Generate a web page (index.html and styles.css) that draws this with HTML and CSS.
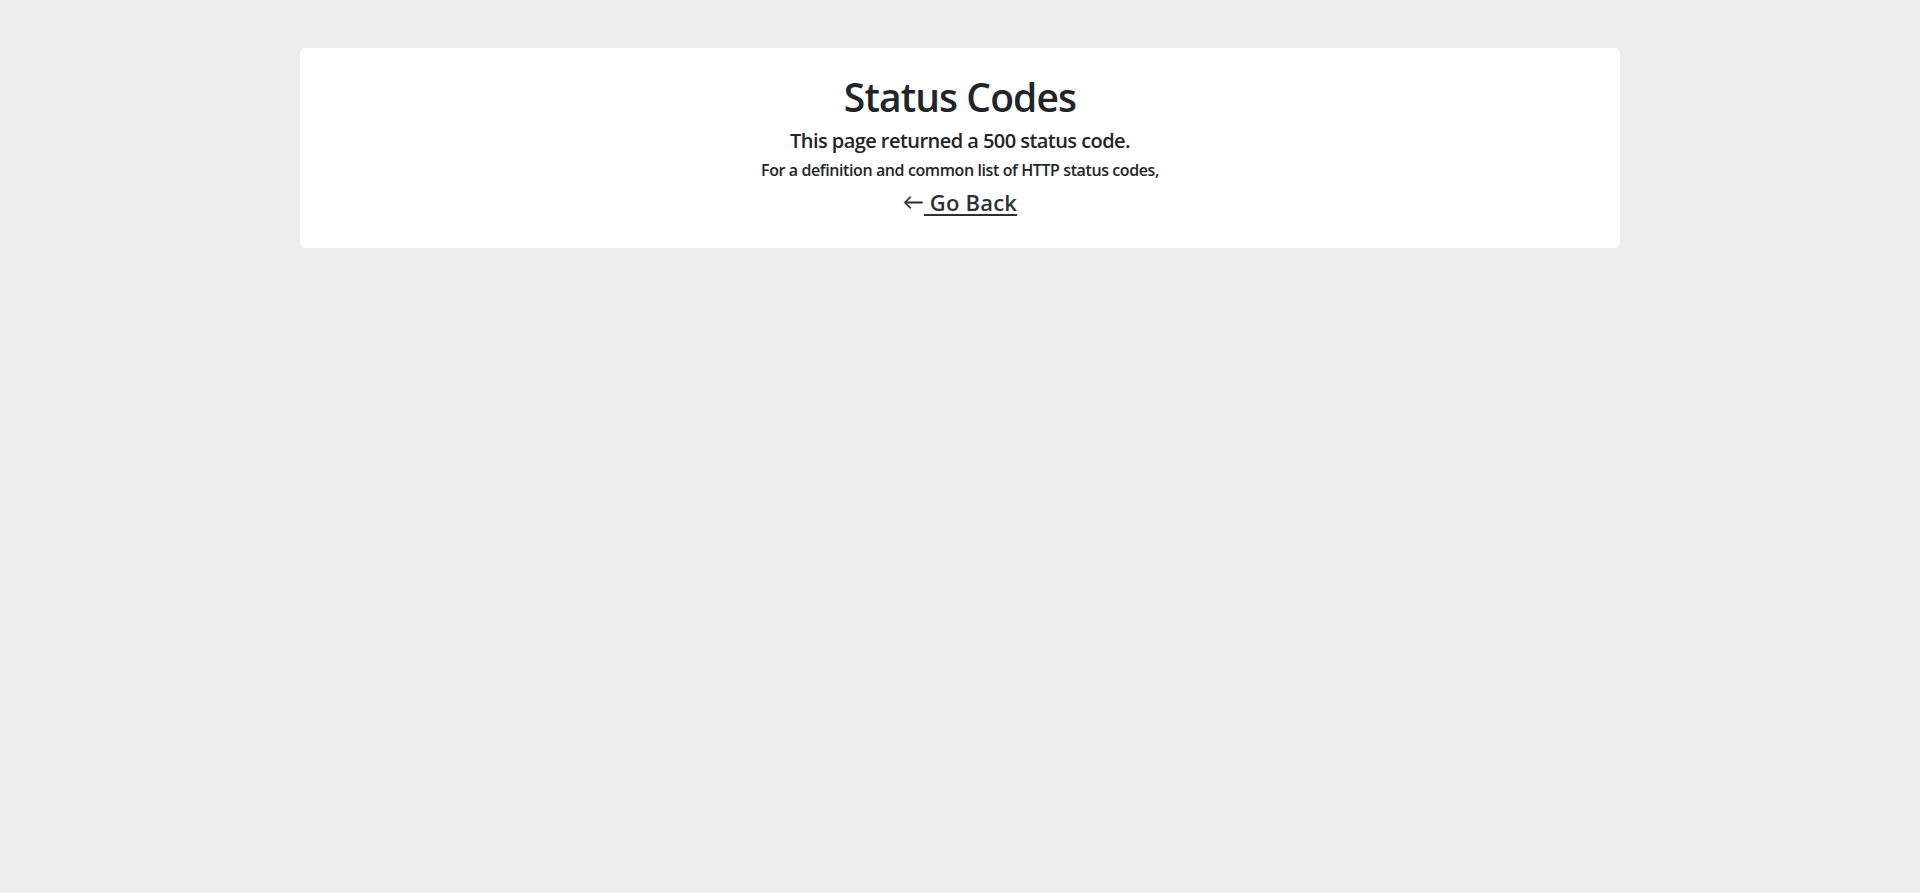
FILE: index.html
```html
<!DOCTYPE html>
<html lang="en">
<head>
<meta charset="utf-8">
<title>Status Codes</title>
<link rel="stylesheet" href="styles.css">
</head>
<body>
<main class="container">
  <section class="card">
    <h1 class="title">Status Codes</h1>
    <h5 class="subtitle">This page returned a 500 status code.</h5>
    <h6 class="note">For a definition and common list of HTTP status codes,</h6>
    <p class="back-row">
      <a class="back-link" href="#"><svg class="arrow" width="21" height="21" viewBox="0 0 16 16" aria-hidden="true"><path fill-rule="evenodd" fill="currentColor" stroke="currentColor" stroke-width="0.45" stroke-linejoin="round" d="M15 8a.5.5 0 0 0-.5-.5H2.707l3.147-3.146a.5.5 0 1 0-.708-.708l-4 4a.5.5 0 0 0 0 .708l4 4a.5.5 0 0 0 .708-.708L2.707 8.5H14.5A.5.5 0 0 0 15 8z"/></svg> Go Back</a>
    </p>
  </section>
</main>
</body>
</html>
```
FILE: styles.css
```css
html, body {
  margin: 0;
  padding: 0;
}
body {
  background: #ededed;
  font-family: "Segoe UI", "Open Sans", "Noto Sans", sans-serif;
  color: #212529;
}
.container {
  width: 1320px;
  margin: 0 auto;
  padding-top: 48px;
}
.card {
  background: #ffffff;
  border-radius: 5px;
  padding: 25px 24px 32px;
  text-align: center;
}
.title {
  margin: 0 0 8px;
  font-size: 39px;
  line-height: 48px;
  font-weight: 600;
  letter-spacing: -0.9px;
}
.subtitle {
  margin: 0 0 8px;
  font-size: 20px;
  line-height: 24px;
  font-weight: 600;
  letter-spacing: -0.55px;
}
.note {
  margin: 0 0 8px;
  font-size: 16px;
  line-height: 19px;
  font-weight: 600;
  letter-spacing: -0.4px;
}
.back-row {
  margin: 0;
  font-size: 22px;
  line-height: 28px;
  font-weight: 600;
  letter-spacing: 0.2px;
}
.back-link {
  color: #2d3035;
  text-decoration: underline;
  text-decoration-thickness: 2px;
  text-underline-offset: 3px;
}
.arrow {
  vertical-align: -2px;
}
```
